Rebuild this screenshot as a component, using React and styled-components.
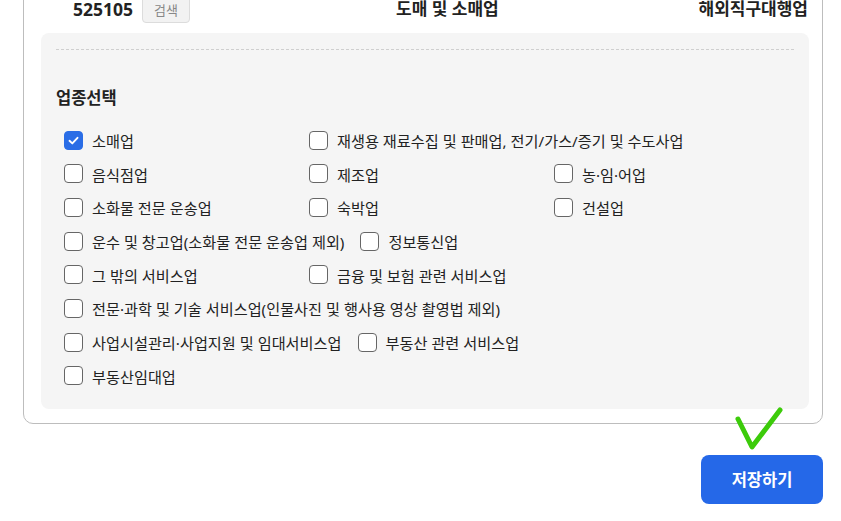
import React, { useState } from 'react';
import styled, { createGlobalStyle } from 'styled-components';

const GlobalStyle = createGlobalStyle`
    html, body {
        margin: 0;
        padding: 0;
        background: #ffffff;
        overflow: hidden;
    }
    body {
        font-family: "Noto Sans", "Noto Sans CJK KR", sans-serif;
        color: #222;
    }
`

const Page = styled.div`
    width: 800px;
    margin: -30px 0 0 23px;
`

const Card = styled.div`
    border: 1px solid #bdbdbd;
    border-radius: 10px;
    padding: 24px 13px 14px 17px;
`

const TopRow = styled.div`
    display: grid;
    grid-template-columns: 355px 1fr auto;
    align-items: center;
    height: 28px;
`

const CodeCell = styled.div`
    display: flex;
    align-items: center;
    gap: 9px;
    padding-left: 32px;
`

const Code = styled.span`
    font-size: 17.5px;
    line-height: 20px;
    font-weight: 700;
    color: #222;
`

const SearchButton = styled.button`
    height: 28px;
    padding: 0 11px;
    border: 1px solid #dcdcdc;
    border-radius: 4px;
    background: #f2f2f2;
    color: #888;
    font-family: inherit;
    font-size: 13px;
`

const CellText = styled.span`
    font-size: 17px;
    line-height: 20px;
    font-weight: 700;
    color: #222;
    text-align: ${p => p.right ? 'right' : 'left'};
    padding-right: ${p => p.right ? '1px' : '0'};
`

const Panel = styled.div`
    margin-top: 10px;
    background: #f5f5f5;
    border-radius: 8px;
    padding: 16px 15px 22px;
`

const Divider = styled.div`
    border-top: 1px dashed #cfcfcf;
`

const Heading = styled.h3`
    margin: 36px 0 19px;
    font-size: 16.5px;
    line-height: 24px;
    font-weight: 700;
    color: #222;
`

const OptionList = styled.div`
    display: flex;
    flex-wrap: wrap;
    column-gap: 16px;
    row-gap: 11.7px;
    padding: 0 9px 0 8px;
`

const Option = styled.label`
    display: inline-flex;
    align-items: center;
    gap: 9px;
    min-width: 229px;
    height: 22px;
    font-size: 15.2px;
    color: #222;
    cursor: pointer;
    white-space: nowrap;
`

const Box = styled.span`
    box-sizing: border-box;
    width: 19px;
    height: 19px;
    border-radius: 4px;
    border: 1px solid ${p => p.checked ? '#2a6de6' : '#666'};
    background: ${p => p.checked ? '#2a6de6' : '#fff'};
    display: flex;
    align-items: center;
    justify-content: center;
    flex-shrink: 0;
`

const Footer = styled.div`
    position: relative;
    display: flex;
    justify-content: flex-end;
    padding-top: 31px;
`

const SaveButton = styled.button`
    width: 122px;
    height: 49px;
    border: none;
    border-radius: 8px;
    background: #2568e8;
    color: #fff;
    font-family: inherit;
    font-size: 16.5px;
    font-weight: 700;
`

const Mark = styled.svg`
    position: absolute;
    left: 708px;
    top: -20px;
`

const options = [
    '소매업',
    '재생용 재료수집 및 판매업, 전기/가스/증기 및 수도사업',
    '음식점업',
    '제조업',
    '농·임·어업',
    '소화물 전문 운송업',
    '숙박업',
    '건설업',
    '운수 및 창고업(소화물 전문 운송업 제외)',
    '정보통신업',
    '그 밖의 서비스업',
    '금융 및 보험 관련 서비스업',
    '전문·과학 및 기술 서비스업(인물사진 및 행사용 영상 촬영법 제외)',
    '사업시설관리·사업지원 및 임대서비스업',
    '부동산 관련 서비스업',
    '부동산임대업',
]

function App() {
    const [selected, setSelected] = useState(['소매업'])

    function toggle(name) {
        setSelected(old => old.includes(name) ? old.filter(v => v !== name) : [...old, name])
    }

    return (
        <Page>
            <GlobalStyle />
            <Card>
                <TopRow>
                    <CodeCell>
                        <Code>525105</Code>
                        <SearchButton>검색</SearchButton>
                    </CodeCell>
                    <CellText>도매 및 소매업</CellText>
                    <CellText right>해외직구대행업</CellText>
                </TopRow>
                <Panel>
                    <Divider />
                    <Heading>업종선택</Heading>
                    <OptionList>
                        {options.map(name => {
                            const checked = selected.includes(name)
                            return (
                                <Option key={name} onClick={() => toggle(name)}>
                                    <Box checked={checked}>
                                        {checked && (
                                            <svg width="13" height="13" viewBox="0 0 13 13">
                                                <path d="M2.5 6.8 L5.3 9.4 L10.5 3.8" fill="none" stroke="#fff" strokeWidth="1.9" strokeLinecap="round" strokeLinejoin="round" />
                                            </svg>
                                        )}
                                    </Box>
                                    {name}
                                </Option>
                            )
                        })}
                    </OptionList>
                </Panel>
            </Card>
            <Footer>
                <Mark width="56" height="48" viewBox="0 0 56 48">
                    <path d="M7 15 L21 43 L49 6" fill="none" stroke="#3ccb0a" strokeWidth="5" strokeLinecap="round" strokeLinejoin="round" />
                </Mark>
                <SaveButton>저장하기</SaveButton>
            </Footer>
        </Page>
    )
}

export default App;
